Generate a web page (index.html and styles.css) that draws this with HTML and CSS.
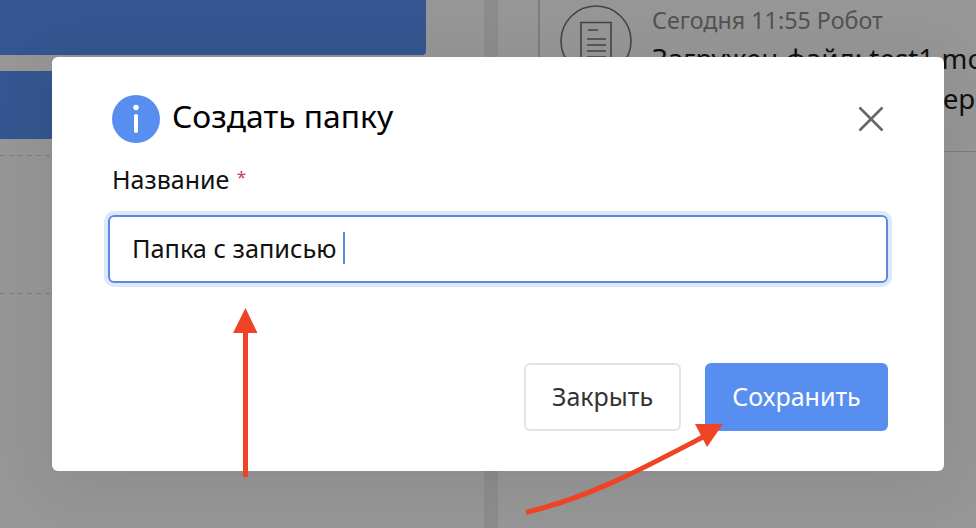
FILE: index.html
```html
<!DOCTYPE html>
<html lang="ru">
<head>
<meta charset="utf-8">
<title>Создать папку</title>
<link rel="stylesheet" href="styles.css">
</head>
<body>
<div class="page">
  <section class="left">
    <div class="blue-card first"></div>
    <div class="blue-card second"></div>
    <div class="dashed one"></div>
    <div class="dashed two"></div>
  </section>
  <div class="gutter"></div>
  <section class="right">
    <div class="rail"></div>
    <div class="event">
      <div class="doc-badge">
        <svg width="72" height="72" viewBox="0 0 72 72" fill="none" stroke="#444" stroke-width="1.6">
          <circle cx="36" cy="36" r="35"/>
          <path d="M21 17.500H51V60H21Z"/>
          <path d="M28 25H38M27 34H46M27 40H46M27 46H46M27 52H46"/>
        </svg>
      </div>
      <div class="event-body">
        <div class="event-meta">Сегодня 11:55 Робот</div>
        <div class="event-text">Загружен файл: test1.mov</div>
        <div class="event-text">Получена запись от Серова</div>
      </div>
    </div>
  </section>
</div>

<div class="modal">
  <header class="modal-head">
    <svg class="info" width="48" height="48" viewBox="0 0 48 48">
      <circle cx="24" cy="24" r="24" fill="#578ef0"/>
      <circle cx="24" cy="12.500" r="2.700" fill="#fff"/>
      <rect x="22" y="19" width="4" height="19" rx="2" fill="#fff"/>
    </svg>
    <h2 class="modal-title">Создать папку</h2>
    <svg class="close" width="26" height="26" viewBox="0 0 26 26" fill="none" stroke="#666" stroke-width="2.600">
      <path d="M1.500 1.500L24.500 24.500M24.500 1.500L1.500 24.500"/>
    </svg>
  </header>
  <label class="field-label">Название <span class="req">*</span></label>
  <div class="input"><span class="input-text">Папка с записью</span><span class="caret"></span></div>
  <footer class="actions">
    <button class="btn btn-ghost">Закрыть</button>
    <button class="btn btn-primary">Сохранить</button>
  </footer>
</div>

<svg class="annot" width="976" height="528" viewBox="0 0 976 528">
  <path d="M245.500 477V330" stroke="#ee4425" stroke-width="5" fill="none"/>
  <path d="M245.500 308L257.500 333H233Z" fill="#ee4425"/>
  <path d="M526 512.500C590 497 640 470 705 436" stroke="#ee4425" stroke-width="5" fill="none"/>
  <path d="M695 424L723 424L707 447Z" fill="#ee4425"/>
</svg>
</body>
</html>
```
FILE: styles.css
```css
* { box-sizing: border-box; }
html, body { margin: 0; height: 100%; }
body {
  width: 976px;
  height: 528px;
  overflow: hidden;
  position: relative;
  background: #969696;
  font-family: "Noto Sans", "Open Sans", sans-serif;
}
.page { display: flex; width: 976px; height: 528px; background: #969696; }
.left { position: relative; width: 484px; flex: none; }
.blue-card { background: #34558f; width: 426px; }
.blue-card.first { height: 55px; border-bottom-right-radius: 4px; }
.blue-card.second { height: 68px; margin-top: 16px; border-top-right-radius: 4px; }
.dashed {
  height: 1px;
  background: repeating-linear-gradient(90deg, #7c7c7c 0 5px, transparent 5px 9px);
}
.dashed.one { margin-top: 16px; }
.dashed.two { margin-top: 137px; }
.gutter { width: 14px; flex: none; background: #8c8c8c; }
.right { flex: 1; min-width: 0; overflow: hidden; display: flex; align-items: flex-start; height: 152px; border-bottom: 1px solid #7c7c7c; padding-left: 40px; }
.rail { width: 2px; height: 152px; background: #7c7c7c; flex: none; }
.event { display: flex; gap: 20px; margin-left: 20px; margin-top: 5px; white-space: nowrap; }
.doc-badge { width: 72px; height: 72px; flex: none; }
.event-body { margin-top: -1px; }
.event-meta { font-size: 23.300px; line-height: 32px; color: #525252; }
.event-text { font-size: 27.700px; line-height: 40px; color: #111; }
.event-meta + .event-text { margin-top: 2px; }

.modal {
  position: absolute;
  left: 52px;
  top: 57px;
  width: 892px;
  height: 414px;
  background: #fff;
  border-radius: 6px;
  box-shadow: 0 10px 60px rgba(0,0,0,.08);
  padding: 38px 56px 40px;
  display: flex;
  flex-direction: column;
}
.modal-head { display: flex; align-items: center; height: 48px; position: relative; padding-left: 4px; }
.info { flex: none; }
.modal-title { margin: 0 0 6px 12px; font-size: 31.800px; line-height: 44px; font-weight: 400; color: #000; }
.close { position: absolute; right: 4px; top: 11px; }
.field-label { margin-top: 21px; padding-left: 4px; font-size: 25px; line-height: 30px; color: #111; }
.req { color: #d0365a; font-size: 17px; line-height: 0; vertical-align: 6px; margin-left: 1px; }
.input {
  margin-top: 21px;
  width: 780px;
  height: 68px;
  border: 2px solid #5b89e0;
  border-radius: 6px;
  box-shadow: 0 0 0 4px #dde8fc;
  display: flex;
  align-items: center;
  padding-left: 22px;
  padding-bottom: 2px;
  font-size: 25.300px;
  color: #111;
}
.caret { width: 2px; height: 32px; background: #5b89e0; margin-left: 7px; }
.actions { margin-top: auto; display: flex; justify-content: flex-end; gap: 24px; width: 780px; }
.btn {
  height: 68px;
  border-radius: 6px;
  font-family: inherit;
  font-size: 25px;
  padding: 0 0 3px;
}
.btn-ghost { width: 157px; background: #fff; border: 2px solid #e2e3ea; color: #333; }
.btn-primary { width: 183px; background: #578ef0; border: 0; color: #fff; }
.annot { position: absolute; left: 0; top: 0; pointer-events: none; }
```
